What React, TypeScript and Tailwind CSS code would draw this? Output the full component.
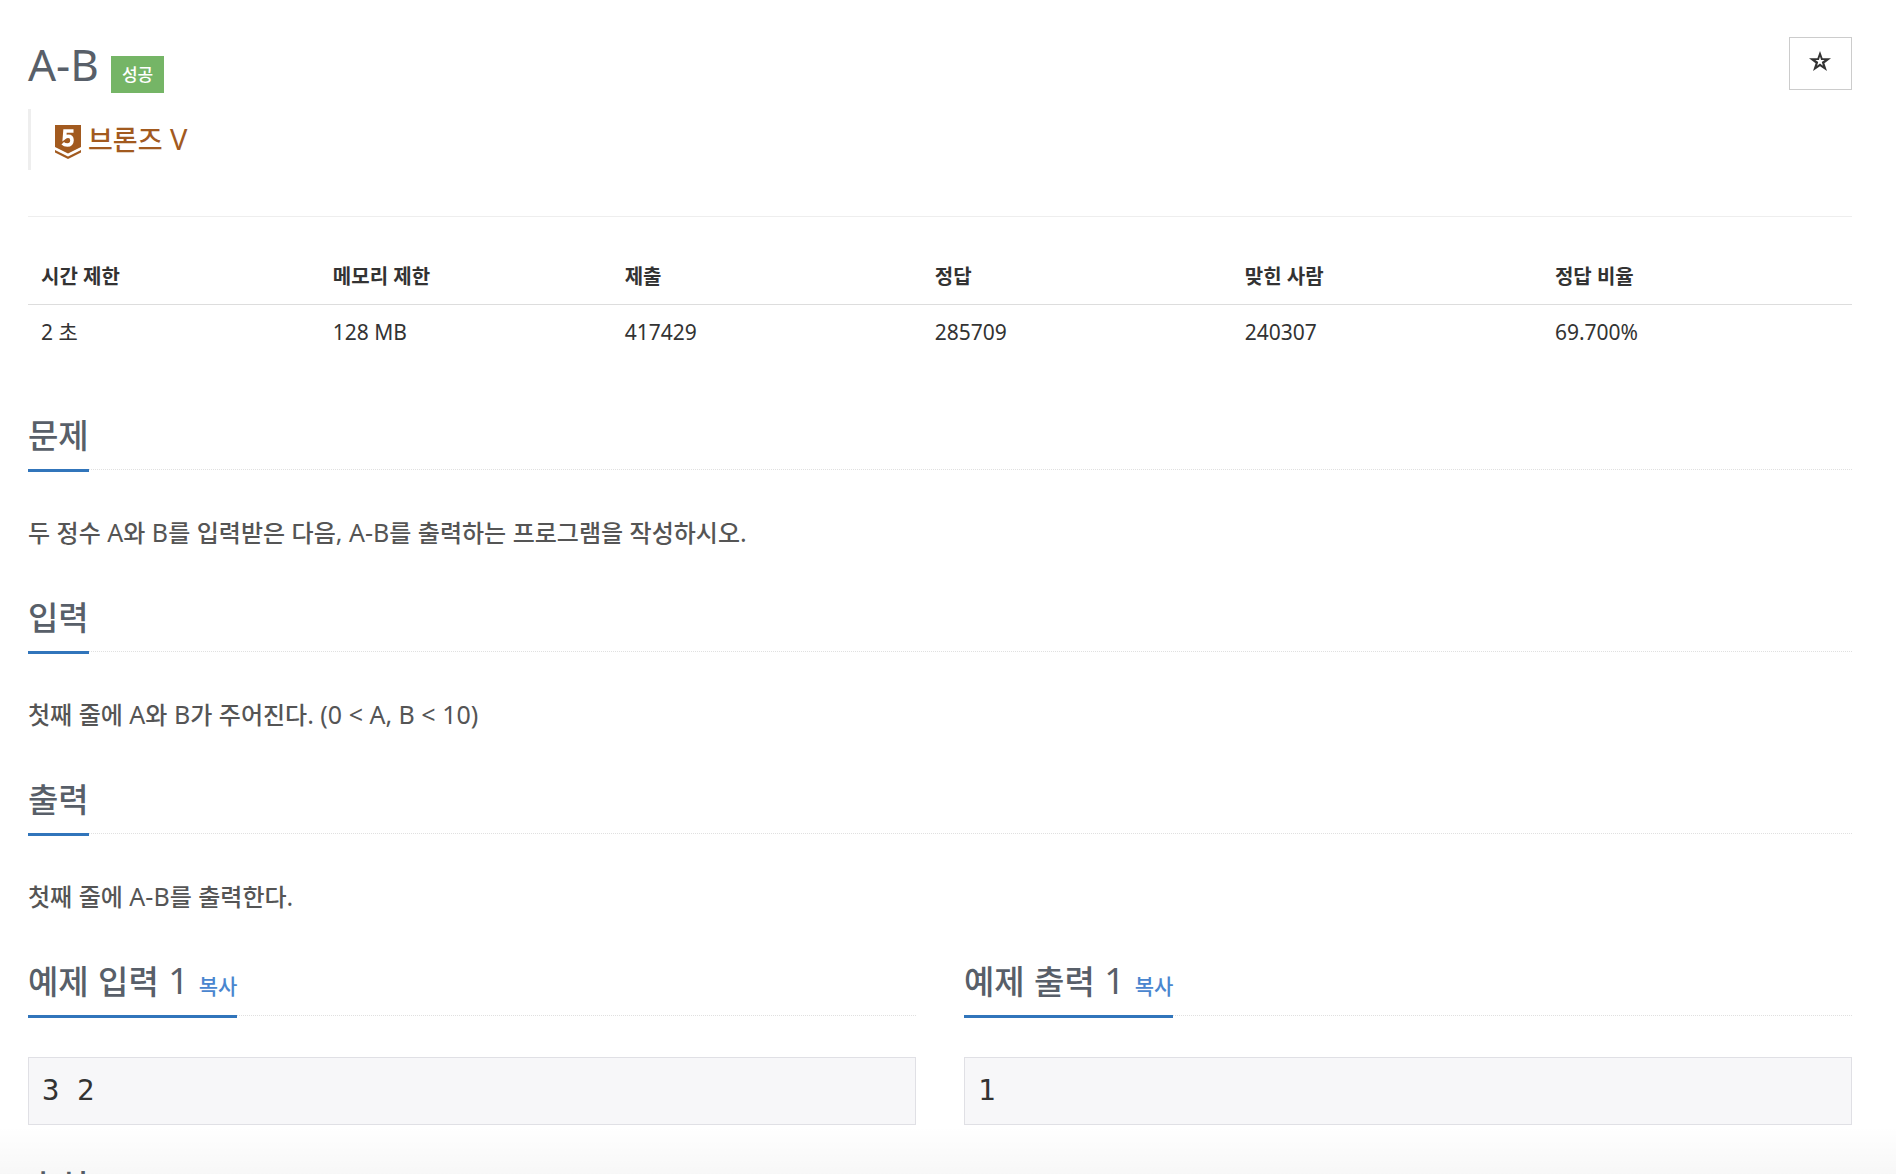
import type { ReactNode } from "react";

const stats = [
  { label: "시간 제한", value: "2 초", width: "w-[16%]" },
  { label: "메모리 제한", value: "128 MB", width: "w-[16%]" },
  { label: "제출", value: "417429", width: "w-[17%]" },
  { label: "정답", value: "285709", width: "w-[17%]" },
  { label: "맞힌 사람", value: "240307", width: "w-[17%]" },
  { label: "정답 비율", value: "69.700%", width: "w-[17%]" },
];

const sections = [
  {
    title: "문제",
    body: "두 정수 A와 B를 입력받은 다음, A-B를 출력하는 프로그램을 작성하시오.",
  },
  { title: "입력", body: "첫째 줄에 A와 B가 주어진다. (0 < A, B < 10)" },
  { title: "출력", body: "첫째 줄에 A-B를 출력한다." },
];

const samples = [
  { title: "예제 입력 1", value: "3 2" },
  { title: "예제 출력 1", value: "1" },
];

// Latin runs are set slightly larger than the Hangul around them
function MixedText({ text, latin }: { text: string; latin: string }) {
  return text.split(/([ -~]+)/).map((run, i) =>
    i % 2 === 1 ? (
      <span key={i} className={`font-normal leading-none ${latin}`}>
        {run}
      </span>
    ) : (
      run
    ),
  );
}

function TierIcon() {
  return (
    <svg viewBox="0 0 26 34" className="mt-1 h-[34px] w-[26px]" aria-hidden="true">
      <path d="M0 0h26v22l-13 6.500L0 22z" fill="#a25a1f" />
      <path d="M0 25l13 6.500L26 25v2.500L13 34 0 27.500z" fill="#a25a1f" />
      <path
        d="M18.500 6H10l-.5 6.500c1-.8 2.200-1.200 3.600-1.200 2.400 0 3.900 1.600 3.900 4 0 2.700-1.700 4.700-4.600 4.700-2 0-3.600-.6-4.700-1.700"
        fill="none"
        stroke="#fff"
        strokeWidth="3.600"
      />
    </svg>
  );
}

function StarIcon() {
  return (
    <svg viewBox="0 0 22 20" className="h-5 w-[22px]" aria-hidden="true">
      <path
        fillRule="evenodd"
        fill="#333"
        d="M11 0l2.600 7.300H22l-6.600 4.900L18 20l-7-4.800L4 20l2.600-7.800L0 7.300h8.400zM11 5.500l-1.100 3.600H6.400l2.800 2-1.100 3.600 2.900-2.200 2.900 2.200-1.100-3.600 2.800-2h-3.500z"
      />
    </svg>
  );
}

function Headline({ title, children }: { title: string; children?: ReactNode }) {
  return (
    <div className="flex border-b border-dotted border-[#e0e0e0]">
      <h2 className="-mb-[3px] flex items-baseline gap-[10px] border-b-3 border-[#3175bb] pb-[13px] text-[33px] leading-10 font-medium text-[#585f69]">
        <span>
          <MixedText text={title} latin="text-[36px]" />
        </span>
        {children}
      </h2>
    </div>
  );
}

export default function App() {
  return (
    <div className="relative h-screen overflow-hidden bg-white pr-11 pl-7 font-['Noto_Sans','Noto_Sans_CJK_KR',sans-serif] text-[#333]">
      <header className="flex items-start justify-between border-b border-[#eee] pt-[37px] pb-[46px]">
        <div>
          <div className="flex items-end gap-3">
            <h1 className="pb-0.5 text-[44px] leading-[54px] text-[#585f69]">A-B</h1>
            <span className="bg-[#75b566] px-[11px] text-[17px] leading-[37px] font-medium text-white">
              성공
            </span>
          </div>
          <blockquote className="mt-4 flex h-[61px] items-center gap-[7px] border-l-3 border-[#eee] pl-6 text-[27px] leading-8 font-medium text-[#a25a1f]">
            <TierIcon />
            <span>
              <MixedText text="브론즈 V" latin="text-[29px]" />
            </span>
          </blockquote>
        </div>
        <button
          type="button"
          aria-label="즐겨찾기"
          className="flex h-[53px] w-[63px] items-center justify-center border border-[#ccc] pr-px pb-[6px]"
        >
          <StarIcon />
        </button>
      </header>

      <table className="mt-9 w-full table-fixed text-left leading-[30px]">
        <thead>
          <tr className="border-b border-[#ddd]">
            {stats.map((stat) => (
              <th
                key={stat.label}
                className={`${stat.width} px-[13px] pt-[9px] pb-3 text-[20px] font-bold`}
              >
                {stat.label}
              </th>
            ))}
          </tr>
        </thead>
        <tbody>
          <tr>
            {stats.map((stat) => (
              <td key={stat.label} className="px-[13px] pt-3 pb-[13px] text-[21px]">
                {stat.value}
              </td>
            ))}
          </tr>
        </tbody>
      </table>

      <div className="mt-14">
        {sections.map((section) => (
          <section key={section.title}>
            <Headline title={section.title} />
            <p className="pt-[45px] pb-[47px] text-2xl leading-9 font-medium text-[#555]">
              <MixedText text={section.body} latin="text-[25px]" />
            </p>
          </section>
        ))}
      </div>

      <div className="grid grid-cols-2 gap-12">
        {samples.map((sample) => (
          <section key={sample.title}>
            <Headline title={sample.title}>
              <button type="button" className="text-[21px] leading-none text-[#4a86cf]">
                복사
              </button>
            </Headline>
            <pre className="mt-[41px] border border-[#e0e0e5] bg-[#f7f7f9] px-[13px] pt-[11px] pb-[13px] font-['DejaVu_Sans_Mono',monospace] text-[29px] leading-[42px]">
              {sample.value}
            </pre>
          </section>
        ))}
      </div>

      <div className="mt-[42px]">
        <Headline title="출처" />
      </div>

      {/* Shade along the bottom edge */}
      <div className="pointer-events-none absolute inset-x-0 bottom-0 h-12 bg-linear-to-b from-transparent to-black/3" />
    </div>
  );
}
